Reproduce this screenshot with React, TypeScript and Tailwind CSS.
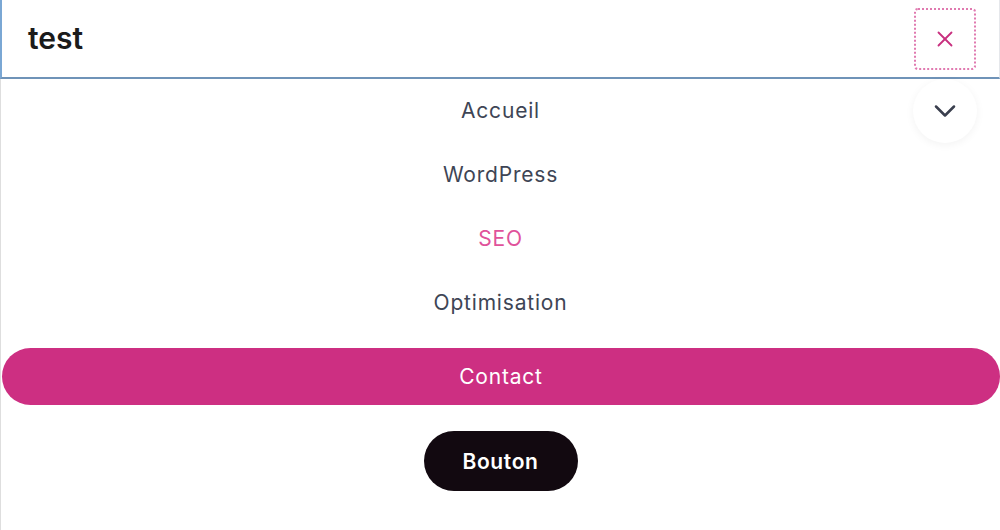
import { X, ChevronDown } from 'lucide-react';

const items = [
  { label: 'Accueil', active: false },
  { label: 'WordPress', active: false },
  { label: 'SEO', active: true },
  { label: 'Optimisation', active: false },
];

export default function App() {
  return (
    <div
      className="h-[530px] w-[1000px] overflow-hidden bg-white"
      style={{ fontFamily: 'Inter, "Open Sans", sans-serif' }}
    >
      {/* ── Search bar ── */}
      <div className="flex h-[79px] items-center justify-between border-b-2 border-l-2 border-r border-b-[#6f93b8] border-l-[#7aa7d4] border-r-[#e5e7eb] pl-[26px] pr-[23px]">
        <span className="text-[30px] font-semibold text-[#1b1b1b]">test</span>
        <button className="flex h-[62px] w-[62px] items-center justify-center rounded-[4px] border-2 border-dotted border-[#e07ab0] text-[#c8307f]">
          <X className="h-[26px] w-[26px]" strokeWidth={1.7} />
        </button>
      </div>

      {/* ── Menu ── */}
      <div className="flex h-[451px] flex-col border-l border-[#dedede]">
        <div className="relative flex flex-col items-center">
          {items.map((item) => (
            <a
              key={item.label}
              className={`flex h-16 items-center text-[21px] tracking-[0.8px] ${
                item.active ? 'text-[#e0529a]' : 'text-[#3e4555]'
              }`}
            >
              {item.label}
            </a>
          ))}
          <div className="absolute right-[23px] top-0 flex h-[64px] w-[64px] items-center justify-center rounded-full bg-white shadow-[0_2px_8px_rgba(0,0,0,0.05)]">
            <ChevronDown className="h-[36px] w-[36px] text-[#3a3f4e]" strokeWidth={1.7} />
          </div>
        </div>

        <div className="mt-[13px] pl-[1px]">
          <button className="flex h-[57px] w-full items-center justify-center rounded-full bg-[#cd2f82] text-[21px] tracking-[0.8px] text-white">
            Contact
          </button>
        </div>

        <div className="mt-[26px] flex justify-center">
          <button className="flex h-[60px] w-[154px] items-center justify-center rounded-full bg-[#120910] pt-[2px] text-[21px] font-semibold tracking-[0.6px] text-white">
            Bouton
          </button>
        </div>
      </div>
    </div>
  );
}
